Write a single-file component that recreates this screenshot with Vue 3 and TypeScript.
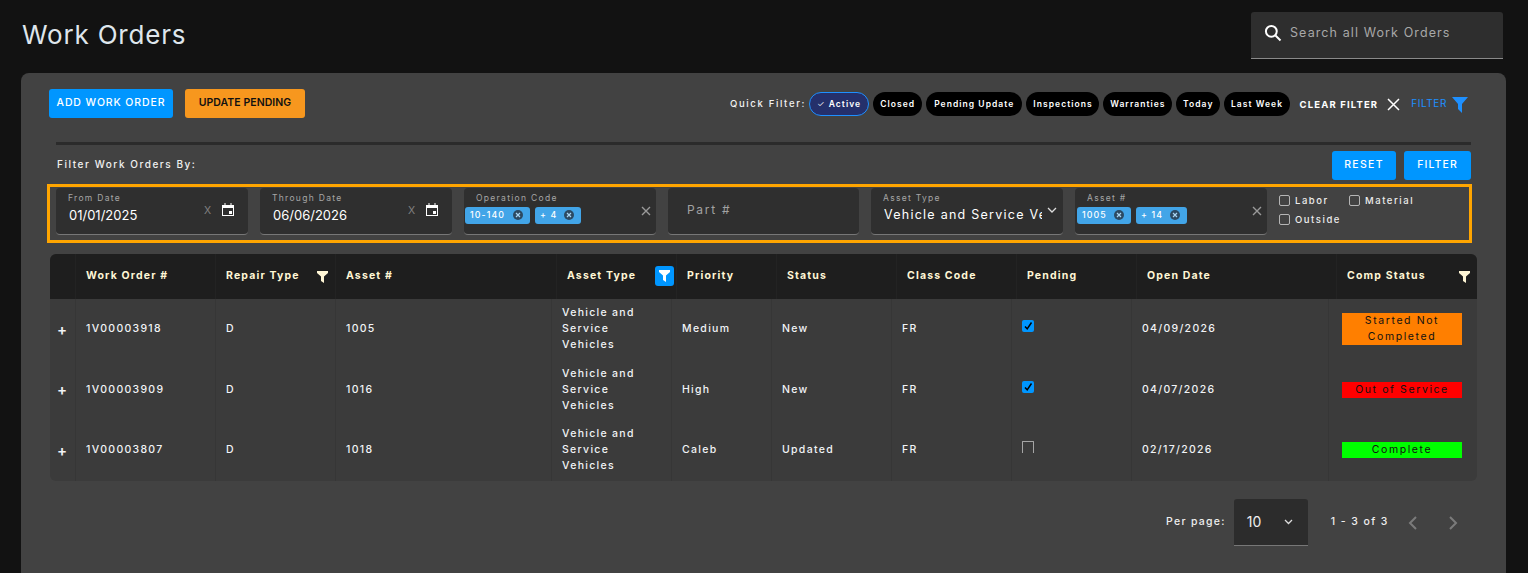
<script setup lang="ts">
interface Row { id: string; asset: string; priority: string; status: string; pending: 'on' | 'off'; date: string; comp: string; cls: string }
const chips = ['Closed', 'Pending Update', 'Inspections', 'Warranties', 'Today', 'Last Week']
const heads = [
  { t: '', f: 0 }, { t: 'Work Order #', f: 0 }, { t: 'Repair Type', f: 1 }, { t: 'Asset #', f: 0 }, { t: 'Asset Type', f: 2 },
  { t: 'Priority', f: 0 }, { t: 'Status', f: 0 }, { t: 'Class Code', f: 0 }, { t: 'Pending', f: 0 }, { t: 'Open Date', f: 0 }, { t: 'Comp Status', f: 1 }
]
const rows: Row[] = [
  { id: '1V00003918', asset: '1005', priority: 'Medium', status: 'New', pending: 'on', date: '04/09/2026', comp: 'Started Not Completed', cls: 'orange' },
  { id: '1V00003909', asset: '1016', priority: 'High', status: 'New', pending: 'on', date: '04/07/2026', comp: 'Out of Service', cls: 'red' },
  { id: '1V00003807', asset: '1018', priority: 'Caleb', status: 'Updated', pending: 'off', date: '02/17/2026', comp: 'Complete', cls: 'green' }
]
</script>

<template>
  <div class="page">
    <header class="top">
      <h1>Work Orders</h1>
      <div class="search">
        <svg width="20" height="20" viewBox="0 0 24 24" fill="none" stroke="#fff" stroke-width="2.4"><circle cx="10" cy="10" r="6.5"/><path d="M15 15l6 6"/></svg>
        <span>Search all Work Orders</span>
      </div>
    </header>

    <main class="card">
      <div class="actions">
        <div class="btns">
          <button class="btn blue add">ADD WORK ORDER</button>
          <button class="btn amber">UPDATE PENDING</button>
        </div>
        <div class="quick">
          <span class="qlabel">Quick Filter:</span>
          <span class="chip active"><span class="tick">✓</span> Active</span>
          <span v-for="c in chips" :key="c" class="chip" :class="{ wide: c === 'Pending Update' }">{{ c }}</span>
          <span class="clear">CLEAR FILTER</span>
          <svg class="clearx" width="13" height="13" viewBox="0 0 13 13" stroke="#fff" stroke-width="1.5"><path d="M1 1l11 11M12 1L1 12"/></svg>
          <span class="flt">FILTER</span>
          <svg class="funnel" width="16" height="17" viewBox="0 0 16 17" fill="#1e90ff"><path d="M0 1h16l-6 7v9l-4-4V8z"/></svg>
        </div>
      </div>

      <div class="rule"></div>

      <div class="fbar">
        <span>Filter Work Orders By:</span>
        <div class="fbtns">
          <button class="btn blue reset">RESET</button>
          <button class="btn blue fbtn">FILTER</button>
        </div>
      </div>

      <section class="filters">
        <div class="field">
          <label>From Date</label>
          <div class="val date">01/01/2025</div>
          <span class="x1">X</span>
          <svg class="cal" width="12" height="13" viewBox="0 0 12 13"><path fill="#fff" d="M0 2h12v11H0zM1 5v7h10V5z" fill-rule="evenodd"/><path fill="#fff" d="M2.5 0h1v2h-1zM8.500 0h1v2h-1zM7 8h3v3H7z"/></svg>
        </div>
        <div class="field">
          <label>Through Date</label>
          <div class="val date">06/06/2026</div>
          <span class="x1">X</span>
          <svg class="cal" width="12" height="13" viewBox="0 0 12 13"><path fill="#fff" d="M0 2h12v11H0zM1 5v7h10V5z" fill-rule="evenodd"/><path fill="#fff" d="M2.5 0h1v2h-1zM8.500 0h1v2h-1zM7 8h3v3H7z"/></svg>
        </div>
        <div class="field multi">
          <label>Operation Code</label>
          <div class="tags">
            <span class="tag w65">10-140<i class="tx"><svg width="10" height="10" viewBox="0 0 10 10" stroke="#a9d5f2" stroke-width="1.2"><path d="M3 3l4 4M7 3L3 7"/></svg></i></span>
            <span class="tag w46">+ 4<i class="tx"><svg width="10" height="10" viewBox="0 0 10 10" stroke="#a9d5f2" stroke-width="1.2"><path d="M3 3l4 4M7 3L3 7"/></svg></i></span>
          </div>
          <svg class="x2" width="10" height="10" viewBox="0 0 10 10" stroke="#9a9a9a" stroke-width="1.4"><path d="M1 1l8 8M9 1L1 9"/></svg>
        </div>
        <div class="field part"><span>Part #</span></div>
        <div class="field">
          <label>Asset Type</label>
          <div class="val clip">Vehicle and Service Vehicles</div>
          <svg class="chev" width="10" height="7" viewBox="0 0 10 7" fill="none" stroke="#ddd" stroke-width="1.300"><path d="M1 1l4 4 4-4"/></svg>
        </div>
        <div class="field multi">
          <label>Asset #</label>
          <div class="tags t2">
            <span class="tag w54">1005<i class="tx"><svg width="10" height="10" viewBox="0 0 10 10" stroke="#a9d5f2" stroke-width="1.2"><path d="M3 3l4 4M7 3L3 7"/></svg></i></span>
            <span class="tag w51">+ 14<i class="tx"><svg width="10" height="10" viewBox="0 0 10 10" stroke="#a9d5f2" stroke-width="1.2"><path d="M3 3l4 4M7 3L3 7"/></svg></i></span>
          </div>
          <svg class="x2" width="10" height="10" viewBox="0 0 10 10" stroke="#9a9a9a" stroke-width="1.4"><path d="M1 1l8 8M9 1L1 9"/></svg>
        </div>
        <div class="checks">
          <label class="ck ck1"><i></i>Labor</label>
          <label class="ck ck2"><i></i>Material</label>
          <label class="ck ck3"><i></i>Outside</label>
        </div>
      </section>

      <section class="table">
        <div class="thead">
          <div v-for="(h, i) in heads" :key="i" class="th">
            <span>{{ h.t }}</span>
            <svg v-if="h.f === 1" class="hf" width="11" height="12" viewBox="0 0 11 12" fill="#fff6d5"><path d="M0 0h11v2L7 5.500V12l-3-2V5.500L0 2z"/></svg>
            <span v-if="h.f === 2" class="hfbox">
              <svg width="11" height="12" viewBox="0 0 11 12" fill="#fff"><path d="M0 0h11v2L7 5.500V12l-3-2V5.500L0 2z"/></svg>
            </span>
          </div>
        </div>
        <div v-for="r in rows" :key="r.id" class="tr">
          <div class="td plus">+</div>
          <div class="td">{{ r.id }}</div>
          <div class="td">D</div>
          <div class="td">{{ r.asset }}</div>
          <div class="td narrow">Vehicle and Service Vehicles</div>
          <div class="td">{{ r.priority }}</div>
          <div class="td">{{ r.status }}</div>
          <div class="td">FR</div>
          <div class="td">
            <span v-if="r.pending === 'on'" class="cb on">
              <svg width="12" height="12" viewBox="0 0 12 12" fill="none" stroke="#000" stroke-width="1.500"><path d="M3 6.500l2.200 2.300L9.500 2.500"/></svg>
            </span>
            <span v-else class="cb off"></span>
          </div>
          <div class="td">{{ r.date }}</div>
          <div class="td"><span class="comp" :class="r.cls">{{ r.comp }}</span></div>
        </div>
      </section>

      <footer class="pager">
        <span class="pp">Per page:</span>
        <div class="sel">
          <span>10</span>
          <svg width="9" height="6" viewBox="0 0 9 6" fill="none" stroke="#ddd" stroke-width="1.300"><path d="M1 1l3.500 3.500L8 1"/></svg>
        </div>
        <span class="range">1 - 3 of 3</span>
        <svg class="pv" width="10" height="14" viewBox="0 0 10 14" fill="none" stroke="#7b7b7b" stroke-width="2"><path d="M8 1L2 7l6 6"/></svg>
        <svg class="nx" width="10" height="14" viewBox="0 0 10 14" fill="none" stroke="#7b7b7b" stroke-width="2"><path d="M2 1l6 6-6 6"/></svg>
      </footer>
    </main>
  </div>
</template>

<style scoped>
* { box-sizing: border-box; }
.page { height: 573px; width: 1528px; overflow: hidden; background: #121212; font-family: Inter, "Liberation Sans", sans-serif; color: #fff; }
.top { height: 73px; display: flex; justify-content: space-between; padding: 12px 25px 0 22px; }
h1 { margin: 7px 0 0; font-size: 26px; line-height: 32px; font-weight: 400; letter-spacing: .8px; color: #dfe6ec; }
.search { width: 252px; height: 47px; background: #2e2e2e; border-bottom: 1px solid #8a8a8a; border-radius: 3px 3px 0 0; display: flex; align-items: flex-start; padding: 11px 0 0 12px; gap: 7px; }
.search span { font-size: 12.500px; line-height: 20px; letter-spacing: 1.1px; color: #a8a8a8; }
.card { width: 1485px; height: 500px; margin-left: 21px; background: #424242; border-radius: 8px 8px 0 0; padding: 16px 0 0 28px; }
.actions { display: flex; justify-content: space-between; height: 53px; padding-right: 38px; }
.btns { display: flex; gap: 12px; }
.btn { border: 0; border-radius: 3px; font-family: inherit; font-size: 10.500px; font-weight: 500; padding: 0 0 2px; letter-spacing: .9px; height: 29px; }
.blue { background: #0096ff; color: #fff; }
.amber { width: 120px; background: #f7971e; color: #111; letter-spacing: .05px; font-weight: 600; }
.add { width: 124px; }
.quick { display: flex; align-items: flex-start; padding-top: 3px; }
.qlabel { font-size: 9.500px; line-height: 24px; letter-spacing: 1.65px; font-weight: 500; color: #f2f2f2; margin-right: 3px; }
.chip { height: 24px; border-radius: 12px; background: #000; font-size: 8.500px; line-height: 24px; font-weight: 600; letter-spacing: 1.05px; padding: 0 6.500px 0 7px; margin-right: 4px; white-space: nowrap; }
.chip.wide { padding: 0 8px 0 8.500px; }
.chip.active { background: #25306b; border: 1px solid #1e90ff; line-height: 22px; padding: 0 7px; }
.tick { font-weight: 300; }
.clear { font-size: 9.500px; line-height: 26px; font-weight: 700; letter-spacing: 1.15px; margin: 0 9px 0 6px; }
.clearx { margin: 6px 11px 0 0; }
.flt { font-size: 10px; line-height: 22px; color: #1e90ff; letter-spacing: .6px; margin-right: 5px; }
.funnel { margin-top: 4px; }
.rule { width: 1415px; height: 3px; margin-left: 7px; background: #2b2b2b; }
.fbar { display: flex; justify-content: space-between; align-items: center; width: 1415px; margin: 6px 0 0 7px; height: 29px; font-size: 10px; font-weight: 500; letter-spacing: 1.55px; color: #f0f0f0; }
.fbar > span { padding: 0 0 4px 1px; }
.fbtns { display: flex; gap: 8px; }
.reset { width: 64px; letter-spacing: 1.3px; }
.fbtn { width: 67px; letter-spacing: 1.100px; }
.filters { width: 1425px; height: 59px; margin: 4px 0 0 -2px; border: 3px solid #ffa500; padding: 1px 0 0 6px; display: flex; gap: 12px; }
.field { position: relative; width: 192px; height: 47px; background: #2f2f2f; border-radius: 4px; border-bottom: 1px solid #777; flex: none; }
.field.part { width: 191px; }
.field label { position: absolute; left: 12px; top: 4px; font-size: 8.500px; line-height: 12px; letter-spacing: 1.3px; color: #a6a6a6; }
.val { position: absolute; left: 13px; top: 17px; font-size: 12.500px; line-height: 20px; letter-spacing: 1.25px; color: #fff; white-space: nowrap; }
.val.date { letter-spacing: 0; font-size: 13px; }
.val.clip { width: 158px; overflow: hidden; }
.x1 { position: absolute; left: 148px; top: 16px; font-size: 10.500px; line-height: 14px; color: #808080; }
.cal { position: absolute; left: 166px; top: 15px; }
.tags { position: absolute; left: 1px; top: 19px; display: flex; gap: 5px; }
.tags.t2 { left: 2px; }
.tag { position: relative; height: 17px; border-radius: 3px; background: #42a5e8; font-size: 8.800px; line-height: 16px; font-weight: 500; letter-spacing: 1.1px; color: #fff; padding-left: 5px; display: block; }
.w65 { width: 65px; } .w46 { width: 46px; } .w54 { width: 54px; } .w51 { width: 51px; }
.tx { position: absolute; right: 7px; top: 3px; width: 10px; height: 10px; border-radius: 50%; background: #2c4a62; display: block; }
.tx svg { display: block; }
.x2 { position: absolute; right: 5px; top: 18px; }
.chev { position: absolute; right: 6px; top: 19px; }
.part span { position: absolute; left: 19px; top: 13px; font-size: 12px; line-height: 18px; letter-spacing: 1.7px; color: #a2a2a2; }
.checks { position: relative; flex: 1; display: grid; grid-template-columns: 70px auto; grid-template-rows: 19px 19px; margin: 3px 0 0 0; }
.ck { display: flex; align-items: center; gap: 5px; font-size: 9.500px; letter-spacing: 1.55px; font-weight: 500; color: #ececec; }
.ck i { width: 11px; height: 11px; border: 1px solid #b5b5b5; border-radius: 2px; }
.ck3 { grid-column: 1 / 3; }
.table { width: 1427px; margin: 11px 0 0 1px; height: 227px; border-radius: 6px; overflow: hidden; background: #3b3b3b; }
.thead { display: grid; grid-template-columns: 25px 140px 120px 221px 120px 100px 120px 120px 120px 200px 141px; height: 45px; background: #1e1e1e; }
.th { position: relative; display: flex; align-items: center; padding: 0 0 2px 10px; font-size: 10.500px; font-weight: 700; letter-spacing: 1.15px; color: #fff6d5; border-left: 1px solid #232323; }
.th:first-child { border-left: 0; padding: 0; }
.hf { position: absolute; right: 7px; top: 17px; }
.hfbox { position: absolute; right: 2px; top: 12px; width: 19px; height: 20px; background: #0096ff; border-radius: 3px; display: flex; align-items: center; justify-content: center; }
.tr { display: grid; grid-template-columns: 25px 140px 120px 216px 120px 100px 120px 120px 120px 197px 149px; height: 60.500px; }
.td { display: flex; align-items: center; padding: 0 10px 0 10px; font-size: 10.500px; line-height: 16px; font-weight: 500; letter-spacing: 1.3px; color: #f1f3f6; border-left: 1px solid #363636; }
.td:first-child { border-left: 0; }
.td.narrow { padding-right: 30px; }
.td.plus { padding: 1px 0 0 7px; font-size: 15px; font-weight: 600; letter-spacing: 0; }
.cb { display: block; width: 12px; height: 12px; margin-bottom: 6px; border-radius: 2px; }
.cb.on { background: #0096ff; }
.cb.off { border: 1px solid #a5a5a5; border-bottom: 0; border-radius: 1px 1px 0 0; }
.comp { display: block; flex: none; width: 120px; margin-left: 3px; padding: 0 6px; text-align: center; color: #111; font-size: 10.500px; font-weight: 400; letter-spacing: 1.6px; line-height: 16px; }
.orange { background: #ff7f00; }
.red { background: #ff0000; }
.green { background: #00ff00; }
.pager { display: flex; align-items: flex-start; margin-top: 18px; padding-left: 1117px; font-size: 10.500px; font-weight: 500; letter-spacing: 1.3px; color: #eee; }
.pp { line-height: 46px; margin-right: 8px; }
.sel { width: 74px; height: 47px; background: #2c2c2c; border-bottom: 1px solid #777; border-radius: 3px 3px 0 0; display: flex; align-items: center; justify-content: space-between; padding: 0 15px 1px 13px; font-size: 14px; font-weight: 400; letter-spacing: 0; }
.range { line-height: 46px; margin-left: 23px; letter-spacing: 1.4px; }
.pv { margin: 17px 0 0 19px; }
.nx { margin: 17px 0 0 30px; }
</style>
